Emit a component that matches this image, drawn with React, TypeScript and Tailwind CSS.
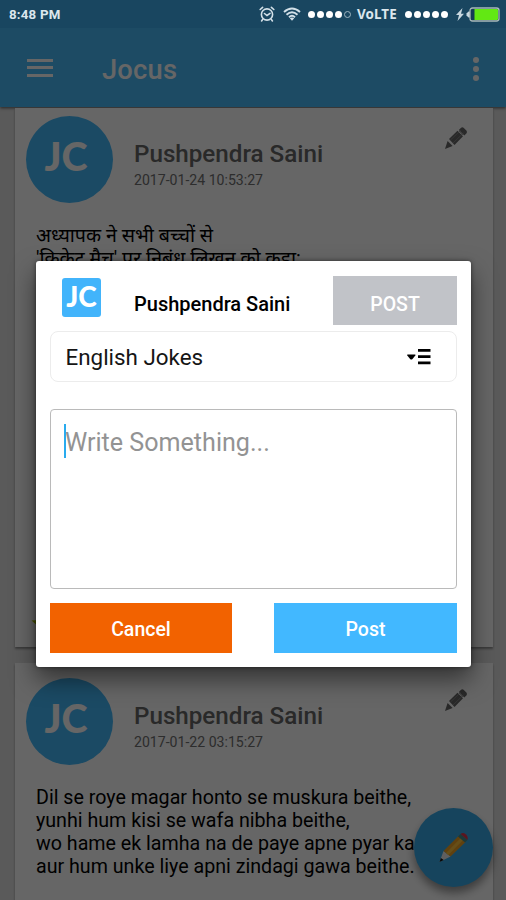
import React, { useState } from 'react';

interface Joke {
    id: number;
    author: string;
    date: string;
    lines: string[];
}

const JOKES: Joke[] = [
    {
        id: 1,
        author: 'Pushpendra Saini',
        date: '2017-01-24 10:53:27',
        lines: ['अध्यापक ने सभी बच्चों से', "'क्रिकेट मैच' पर निबंध लिखन को कहा:"],
    },
    {
        id: 2,
        author: 'Pushpendra Saini',
        date: '2017-01-22 03:15:27',
        lines: [
            'Dil se roye magar honto se muskura beithe,',
            'yunhi hum kisi se wafa nibha beithe,',
            'wo hame ek lamha na de paye apne pyar ka',
            'aur hum unke liye apni zindagi gawa beithe.',
        ],
    },
];

const AlarmIcon = () => (
    <svg width="16" height="16" viewBox="0 0 16 16" fill="none" stroke="#d3e0e8" strokeWidth="1.6" strokeLinecap="round">
        <circle cx="8" cy="8.5" r="5.6" />
        <path d="M5.5 7.5 8 9.5l3-2.2M1.200 3.500 3.600 1.300M14.800 3.500l-2.400-2.200M3.600 13.600l-1 1.300M12.400 13.600l1 1.300" />
    </svg>
);

const WifiIcon = () => (
    <svg width="18" height="14" viewBox="0 0 18 14" fill="none" stroke="#d3e0e8" strokeWidth="1.9">
        <path d="M1 5Q9-2 17 5M3.5 7.7Q9 2.8 14.5 7.7M6 10.2q3-2.7 6 0" />
        <path d="m6.8 11.3 2.2 2.4 2.2-2.4Q9 9.6 6.8 11.3Z" fill="#d3e0e8" stroke="none" />
    </svg>
);

const SignalDots = ({ filled }: { filled: number }) => (
    <div className="flex items-center gap-[2px]">
        {[0, 1, 2, 3, 4].map((i) => (
            <span
                key={i}
                className={i < filled ? 'h-[7px] w-[7px] rounded-full bg-white' : 'h-[7px] w-[7px] rounded-full border border-[#9fb5c1]'}
            />
        ))}
    </div>
);

const BatteryIcon = () => (
    <svg width="44" height="15" viewBox="0 0 44 15">
        <path d="M6.5 1 0 8h3l-1.5 6L8 6.7H5Z" fill="#c9d8e0" />
        <path d="M14 4.5h-1.5l-2 2v2l2 2H14Z" fill="#c9d8e0" />
        <rect x="14" y="1" width="29" height="13" rx="2.5" fill="#143c55" stroke="#a9b9b9" strokeWidth="1.3" />
        <path d="M18.500 2h22.500q1 0 1 1v9q0 1-1 1H18.500Z" fill="#62e813" />
    </svg>
);

const StatusBar = () => (
    <div className="relative z-20 flex h-[28px] shrink-0 items-center bg-[#194660] pl-[9px] pt-[1px] text-[13.3px] font-bold text-[#dce7ed]">
        <span className="tracking-[0.2px]">8:48 PM</span>
        <div className="ml-auto flex items-center pr-[6px]">
            <AlarmIcon />
            <span className="ml-[8px]"><WifiIcon /></span>
            <span className="ml-[7px]"><SignalDots filled={4} /></span>
            <span className="ml-[6px] w-[41px] font-['Noto_Sans',sans-serif] text-[13.4px] tracking-[0.1px]">VoLTE</span>
            <span className="ml-[7px]"><SignalDots filled={5} /></span>
            <span className="ml-[8px]"><BatteryIcon /></span>
        </div>
    </div>
);

const AppBar = () => (
    <header className="flex h-[79px] shrink-0 items-center bg-[#49bbf9] pl-[27px] pr-[27px] text-white shadow-[0_1px_3px_rgba(0,0,0,0.6)]">
        <div className="flex w-[26px] flex-col gap-[4.5px]">
            <span className="h-[3px] bg-white" />
            <span className="h-[3px] bg-white" />
            <span className="h-[3px] bg-white" />
        </div>
        <h1 className="ml-[49px] pt-[5px] text-[27.3px] font-medium tracking-[0.2px]">Jocus</h1>
        <div className="ml-auto flex flex-col gap-[3px] pt-[2px]">
            <span className="h-[6px] w-[6px] rounded-full bg-white" />
            <span className="h-[6px] w-[6px] rounded-full bg-white" />
            <span className="h-[6px] w-[6px] rounded-full bg-white" />
        </div>
    </header>
);

const EditIcon = () => (
    <svg width="24" height="24" viewBox="0 0 24 24" fill="#666">
        <path d="m1 23 2.600-8 5 5Z" />
        <path d="m5 13 8.500-8.300 5.500 5.600L10.500 19Z" />
        <path d="m14.800 4 2-2q1.500-1.500 3 0l2.500 2.500q1.500 1.500 0 3l-2 2Z" />
        <path d="m15.500 5.500 3.500 3.500M6.500 14l10-9.500M9 17 19.500 7" stroke="#929292" strokeWidth="0.8" />
    </svg>
);

const PencilIcon = () => (
    <svg width="32" height="32" viewBox="0 0 32 32">
        <path d="m1.500 30 4-11 7 5.500Z" fill="#eee" />
        <path d="m1.500 30 1.400-4 2.800 2.100Z" fill="#101010" />
        <path d="M5.500 19 21 3.500l7 6L12.500 24.500Z" fill="#f0a324" />
        <path d="m8 21 15-15.300 2.500 2L10.300 23Z" fill="#ffc33c" />
        <path d="M20 4.500 22.500 2l7 6-2.500 2.500Z" fill="#478e8c" />
        <path d="M22.500 2q2.500-2 5.200.2T29.500 8Z" fill="#e2364b" />
    </svg>
);

const JokeCard = ({ joke, className }: { joke: Joke; className: string }) => (
    <article className={`relative shrink-0 bg-white shadow-[0_2px_2px_rgba(0,0,0,0.35)] ${className}`}>
        <div className="flex pl-[11px]">
            <div className="flex h-[87px] w-[87px] shrink-0 items-center justify-center rounded-full bg-[#45bafb] pb-[7px] pr-[7px] font-['Lato',sans-serif] text-[39.5px] font-black leading-none text-white">
                JC
            </div>
            <div className="ml-[21px] pt-[24px]">
                <h2 className="text-[24.2px] font-medium leading-[28px] text-[#666]">{joke.author}</h2>
                <p className="mt-[4px] text-[14.1px] leading-[16px] text-[#707070]">{joke.date}</p>
            </div>
            <div className="ml-auto mr-[25px] mt-[10px]">
                <EditIcon />
            </div>
        </div>
        <div className="ml-[21px] mt-[21px] whitespace-nowrap text-[19.65px] leading-[23px] text-black">
            {joke.lines.map((line) => (
                <p key={line}>{line}</p>
            ))}
        </div>
        {joke.id === 1 && (
            <svg className="absolute bottom-[11px] left-[16px]" width="24" height="24" viewBox="0 0 24 24" fill="#b4cc00">
                <path d="m12 .5 3.200 7.500 8.300.600-6.300 5.400 2 8L12 17.700 4.800 22l2-8L.5 8.600 8.800 8Z" />
            </svg>
        )}
    </article>
);

const PostDialog = () => {
    const [text, setText] = useState('');

    return (
        <div className="absolute left-[36px] top-[261px] z-20 flex h-[406px] w-[435px] flex-col rounded-[3px] bg-white px-[14px] pt-[15px] shadow-[0_12px_24px_rgba(0,0,0,0.5),0_0_4px_rgba(0,0,0,0.5)]">
            <div className="flex h-[49px]">
                <div className="ml-[12px] mt-[2px] flex h-[39px] w-[39px] items-center justify-center rounded-[3px] bg-[#42b4fb] pb-[3px] font-['Lato',sans-serif] text-[28px] font-black leading-none text-white">
                    JC
                </div>
                <span className="ml-[33px] mt-[16px] text-[20px] font-medium leading-[24px] text-black">Pushpendra Saini</span>
                <button className="ml-auto h-[49px] w-[124px] bg-[#c1c3c8] pt-[8px] text-[19.5px] font-medium text-white">POST</button>
            </div>
            <div className="mt-[6px] flex h-[51px] items-center justify-between rounded-[8px] border border-[#ececec] pl-[14.500px] pr-[25px]">
                <span className="pt-[2px] text-[22.4px] text-[#151515]">English Jokes</span>
                <svg width="24" height="16" viewBox="0 0 24 16" fill="#000">
                    <path d="M.5 5.500H8q.8 0 .3.900L5.500 10q-1.200 1.200-2.400 0L.3 6.400Q0 5.500.5 5.500Z" />
                    <path d="M11 0h12.500v2.800H11ZM11 6.200h12.500V9H11ZM11 12.400h12.500v2.800H11Z" />
                </svg>
            </div>
            <div className="relative mt-[27px] h-[180px] rounded-[4px] border border-[#bababa]">
                <textarea
                    value={text}
                    onChange={(e) => setText(e.target.value)}
                    placeholder="Write Something..."
                    className="h-full w-full resize-none pl-[14px] pt-[17px] text-[25.1px] leading-[32px] text-black outline-none placeholder:text-[#939393]"
                />
                <span className="absolute left-[13px] top-[14px] h-[34px] w-[2px] bg-[#29abee]" />
            </div>
            <div className="mt-[14px] flex justify-between">
                <button className="h-[50px] w-[182px] bg-[#f26200] pt-[3px] text-[19.5px] font-medium text-white">Cancel</button>
                <button className="h-[50px] w-[183px] bg-[#42b8ff] pt-[3px] text-[19.5px] font-medium text-white">Post</button>
            </div>
        </div>
    );
};

export default function App() {
    return (
        <div className="relative flex h-[900px] w-[506px] flex-col overflow-hidden bg-[#e0e0e0] font-['Roboto','Noto_Sans',sans-serif]">
            <StatusBar />
            <AppBar />
            <main className="flex flex-col gap-[16px] pl-[15px] pr-[13px] pt-px">
                <JokeCard joke={JOKES[0]} className="h-[539px] pt-[8px]" />
                <JokeCard joke={JOKES[1]} className="h-[260px] pt-[15px]" />
            </main>
            <button className="absolute left-[414px] top-[808px] flex h-[79px] w-[79px] items-center justify-center rounded-full bg-[#37abe9] shadow-[0_6px_9px_rgba(0,0,0,0.4)]">
                <PencilIcon />
            </button>
            {/* Dim everything behind the dialog */}
            <div className="absolute inset-0 z-10 bg-black/60" />
            <PostDialog />
        </div>
    );
}
